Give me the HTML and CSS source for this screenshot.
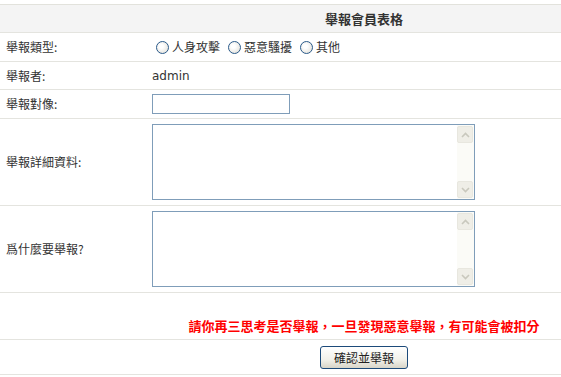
FILE: index.html
```html
<!DOCTYPE html>
<html>
<head>
  <title>舉報會員</title>
  <link rel="stylesheet" href="styles.css">
</head>

<body>
  <form class="report-form">
    <div class="row row-head">
      <div class="cell-label"></div>
      <div class="cell-value cell-center"><span class="form-title">舉報會員表格</span></div>
    </div>

    <div class="row row-small">
      <div class="cell-label">舉報類型:</div>
      <div class="cell-value">
        <label class="choice"><input type="radio" name="type"> 人身攻擊</label>
        <label class="choice"><input type="radio" name="type"> 惡意騷擾</label>
        <label class="choice"><input type="radio" name="type"> 其他</label>
      </div>
    </div>

    <div class="row row-short">
      <div class="cell-label">舉報者:</div>
      <div class="cell-value"><span class="user-name">admin</span></div>
    </div>

    <div class="row row-small">
      <div class="cell-label">舉報對像:</div>
      <div class="cell-value"><input type="text" class="text-input"></div>
    </div>

    <div class="row row-tall">
      <div class="cell-label">舉報詳細資料:</div>
      <div class="cell-value">
        <div class="text-box">
          <textarea class="text-area"></textarea>
          <div class="scroll-bar">
            <div class="scroll-btn">
              <svg width="9" height="6" viewBox="0 0 9 6"><polyline points="1,5 4.5,1.5 8,5" fill="none" stroke="#c9c8bd" stroke-width="1.6"/></svg>
            </div>
            <div class="scroll-btn">
              <svg width="9" height="6" viewBox="0 0 9 6"><polyline points="1,1 4.5,4.5 8,1" fill="none" stroke="#c9c8bd" stroke-width="1.6"/></svg>
            </div>
          </div>
        </div>
      </div>
    </div>

    <div class="row row-tall">
      <div class="cell-label">爲什麼要舉報?</div>
      <div class="cell-value">
        <div class="text-box">
          <textarea class="text-area"></textarea>
          <div class="scroll-bar">
            <div class="scroll-btn">
              <svg width="9" height="6" viewBox="0 0 9 6"><polyline points="1,5 4.5,1.5 8,5" fill="none" stroke="#c9c8bd" stroke-width="1.6"/></svg>
            </div>
            <div class="scroll-btn">
              <svg width="9" height="6" viewBox="0 0 9 6"><polyline points="1,1 4.5,4.5 8,1" fill="none" stroke="#c9c8bd" stroke-width="1.6"/></svg>
            </div>
          </div>
        </div>
      </div>
    </div>

    <div class="row row-note">
      <div class="cell-label"></div>
      <div class="cell-value cell-center"><span class="warning">請你再三思考是否舉報，一旦發現惡意舉報，有可能會被扣分</span></div>
    </div>

    <div class="row row-submit">
      <div class="cell-label"></div>
      <div class="cell-value cell-center"><button type="button" class="btn-submit">確認並舉報</button></div>
    </div>
  </form>
</body>
</html>
```

FILE: styles.css
```css
body {
  margin: 0;
  background-color: #fff;
  font-family: "Noto Sans CJK TC", "DejaVu Sans", sans-serif;
  font-size: 12px;
  color: #333;
}

.report-form {
  margin-top: 4px;
  border-top: 1px solid #e2e2dc;
}

.row {
  display: grid;
  grid-template-columns: 147px 1fr;
  align-items: center;
  border-bottom: 1px solid #e4e4df;
  line-height: 16px;
}

.row-head {
  height: 27px;
  background-color: #f4f4f4;
}

.row-small {
  height: 28px;
}

.row-short {
  height: 27px;
}

.row-tall {
  height: 86px;
}

.row-note {
  height: 46px;
  align-items: end;
}

.row-submit {
  height: 34px;
}

.cell-label {
  padding-left: 6px;
}

.cell-value {
  padding: 0 5px;
  display: flex;
  align-items: center;
}

.cell-center {
  justify-content: center;
  padding-left: 25px;
}

.form-title {
  font-size: 13px;
  font-weight: bold;
}

.choice {
  display: inline-flex;
  align-items: center;
  margin-right: 4px;
}

.choice input {
  appearance: none;
  width: 13px;
  height: 13px;
  margin: 0 3px 0 4px;
  border: 1px solid #2a5a8a;
  border-radius: 50%;
  background: radial-gradient(circle at 40% 40%, #fff 20%, #dcdad2 100%);
}

.user-name {
  font-family: "DejaVu Sans", sans-serif;
  font-size: 12px;
  color: #333;
}

.text-input {
  width: 138px;
  height: 20px;
  margin: 0;
  padding: 0 2px;
  box-sizing: border-box;
  border: 1px solid #7f9db9;
  font-size: 12px;
}

.text-box {
  display: flex;
  width: 323px;
  height: 76px;
  box-sizing: border-box;
  border: 1px solid #7f9db9;
  background-color: #fff;
}

.text-area {
  flex: 1;
  border: none;
  resize: none;
  margin: 0;
  padding: 2px;
  outline: none;
  font-size: 12px;
}

.scroll-bar {
  width: 17px;
  padding: 1px 1px 1px 0;
  background-color: #fbfbf7;
  display: flex;
  flex-direction: column;
  justify-content: space-between;
  box-sizing: border-box;
}

.scroll-btn {
  height: 15px;
  background-color: #efeee7;
  border: 1px solid #e8e7df;
  border-radius: 2px;
  display: flex;
  align-items: center;
  justify-content: center;
}

.warning {
  display: block;
  padding-bottom: 5px;
  font-size: 13px;
  font-weight: bold;
  color: #ff0000;
  line-height: 17px;
}

.btn-submit {
  width: 88px;
  height: 23px;
  padding: 0;
  font-family: "Noto Sans CJK TC", sans-serif;
  font-size: 12px;
  color: #222;
  border: 1px solid #1c4a7a;
  border-radius: 3px;
  background: linear-gradient(#ffffff, #f2f1ea 60%, #d8d5c8);
  cursor: pointer;
}
```
